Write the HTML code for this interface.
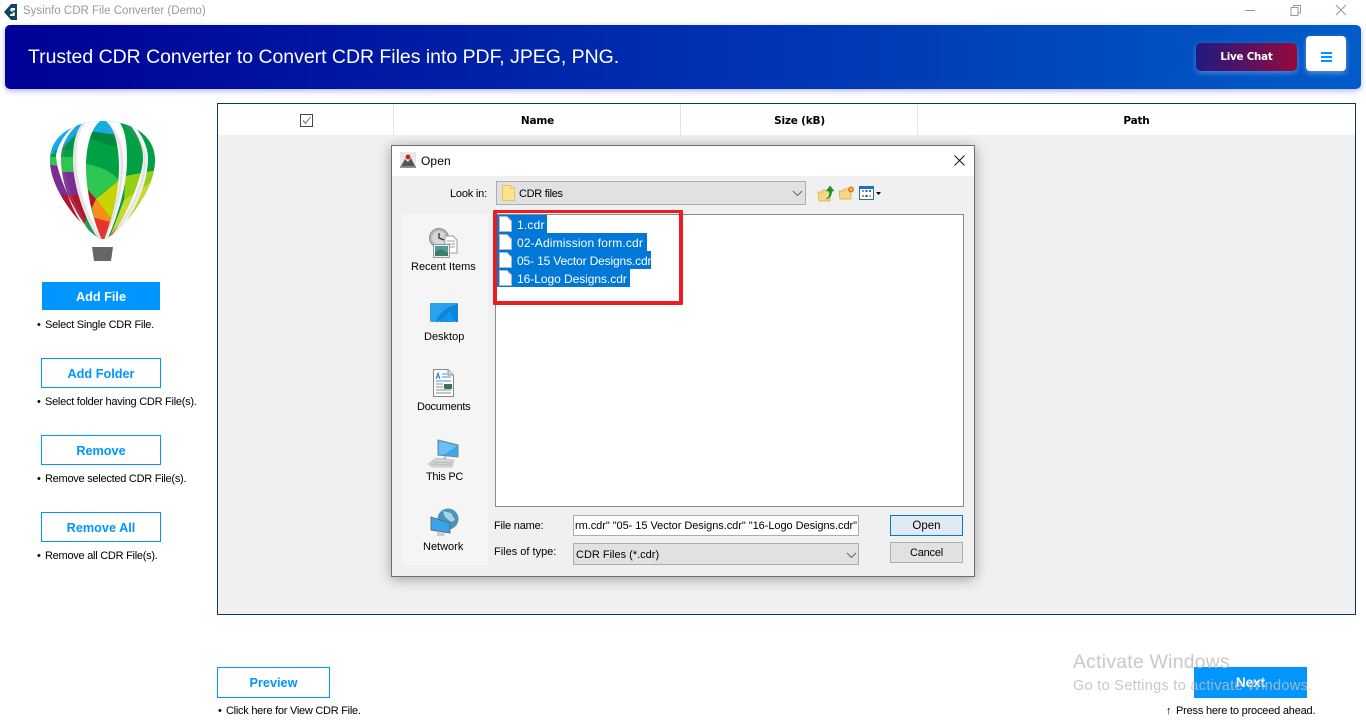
<!DOCTYPE html>
<html lang="en"><head><meta charset="utf-8"><title>Sysinfo CDR File Converter (Demo)</title>
<style>
html,body{margin:0;padding:0;background:#fff;width:1366px;height:728px;overflow:hidden}
body{position:relative;font-family:"Liberation Sans",sans-serif;color:#000}
.a{position:absolute}
.t{position:absolute;white-space:nowrap;line-height:1;font-size:12px}
.c{font-size:11px;letter-spacing:-.26px}
.c i{position:absolute;left:-8px;font-style:normal}
.p{font-size:11px}
.l{font-size:11px;letter-spacing:-.2px}
.btn{position:absolute;box-sizing:border-box;width:120px;height:30px;border:1px solid #0096ff;background:#fff;color:#0096ff;font:bold 12.7px/30px "Liberation Sans",sans-serif;text-align:center}
.hd{position:absolute;top:114px;font:bold 10.5px/14px "DejaVu Sans",sans-serif;letter-spacing:-.2px;text-align:center}
.sel{position:absolute;left:497px;height:18px;background:#0078d7}
.f{position:absolute;left:517px;color:#fff;font-size:12px;line-height:18px;white-space:nowrap}
svg{position:absolute;overflow:visible}
</style></head><body>

<!-- title bar -->
<svg style="left:3px;top:4px" width="16" height="16" viewBox="0 0 16 16"><path d="M8 0 1 8l7 8h6V0z" fill="#0f4560"/><path d="M12 4H8L7 6.500 11 9 7 10.500V12h4.500L12 9 8.500 6.500H12z" fill="#fff"/></svg>
<div class="t" style="left:23px;top:6px;color:#999;font-size:11.500px">Sysinfo CDR File Converter (Demo)</div>
<svg style="left:1245px;top:5px" width="110" height="12" viewBox="0 0 110 12" fill="none" stroke="#999" stroke-width="1"><path d="M0 5.500H10"/><path d="M46 2.500h7v8h-7zM48.500 2.500V.5h7V8h-2"/><path d="M91 0 101 10M101 0 91 10"/></svg>

<!-- header -->
<div class="a" style="left:5px;top:25px;width:1356px;height:64px;border-radius:5px;background:linear-gradient(90deg,#000096,#005cc8);box-shadow:0 2px 6px rgba(40,40,200,.35)"></div>
<div class="t" style="left:28px;top:48px;font-size:19.440px;color:#fff">Trusted CDR Converter to Convert CDR Files into PDF, JPEG, PNG.</div>
<div class="a" style="left:1196px;top:43px;width:101px;height:28px;border-radius:5px;background:linear-gradient(90deg,#1f1a80,#96093c);box-shadow:0 2px 6px rgba(200,210,255,.4);color:#fff;font:bold 10.300px/29px 'DejaVu Sans',sans-serif;letter-spacing:-.2px;text-align:center">Live Chat</div>
<div class="a" style="left:1306px;top:36px;width:40px;height:35px;border-radius:4px;background:#fff;box-shadow:0 2px 6px rgba(200,210,255,.5)"></div>
<div class="a" style="left:1321px;top:52px;width:11px;height:2px;background:#0096ff;box-shadow:0 4px 0 #0096ff,0 8px 0 #0096ff"></div>

<!-- balloon -->
<svg style="left:45px;top:115px" width="116" height="150" viewBox="45 115 116 150">
<defs>
<clipPath id="b"><path d="M103 121C75 121 50 135 50 160C50 190 80 226 100 239H106C126 226 155 190 155 160C155 135 131 121 103 121Z"/></clipPath>
<filter id="bl"><feGaussianBlur stdDeviation="1"/></filter>
</defs>
<g clip-path="url(#b)">
<!-- left gores -->
<rect x="45" y="115" width="45" height="130" fill="#00a044"/>
<path d="M45 115H92L80 130 60 150 50 155H45Z" fill="#13a8ec"/>
<path d="M55 155 76 136 85 135V150H55Z" fill="#00944a"/>
<rect x="45" y="157" width="45" height="15" fill="#2ec650"/>
<rect x="45" y="172" width="45" height="25" fill="#7b2c95"/>
<rect x="45" y="195" width="45" height="28" fill="#b3132f"/>
<rect x="85" y="222" width="12" height="20" fill="#f0641e"/>
<path d="M45 164 58 166 65 195 45 195Z" fill="#7b2c95"/>
<!-- centre gore -->
<rect x="86" y="115" width="33" height="130" fill="#00a044"/>
<rect x="86" y="115" width="33" height="19" fill="#16aee2"/>
<path d="M86 132C98 130 110 136 119 134V146C108 148 96 138 86 138Z" fill="#00893f"/>
<path d="M86 164C100 166 112 172 119 180V183C110 187 102 192 96 199L90 208 86 200Z" fill="#2ec650"/>
<path d="M88 190 96 199 92 207 90 208Z" fill="#b3132f"/>
<path d="M96 199C105 191 113 186 119 180V196L112 220Z" fill="#c8d400"/>
<path d="M96 199 112 220 108 240H98L92 208Z" fill="#f39019"/>
<path d="M92 217 110 222 106 240H98Z" fill="#e5352b"/>
<!-- right gores -->
<rect x="119" y="115" width="40" height="130" fill="#00a044"/>
<path d="M113 115H150V135L130 126 116 122Z" fill="#1cc4d8"/>
<path d="M125 176 158 170V188L124 205Z" fill="#95cf15"/>
<path d="M124 200 158 178V190L125 230 108 242Z" fill="#c8d830"/>
<path d="M108 238 118 226 116 242Z" fill="#e5352b"/>
<!-- white gaps -->
<path d="M102 120C92 125 86 145 86 167C86 195 95 225 102 240L99 240C88 225 73 190 73 160C73 145 75 130 85 120Z" fill="#fff"/>
<path d="M104 120C114 125 119 145 119 167C119 195 110 225 104 240L107 240C114 225 127 190 127 160C127 145 126 130 118 120Z" fill="#fff"/>
<path d="M80 121C66 130 58 145 56 155C56 175 78 222 98 240L92 238C78 222 61 190 61 158C61 148 66 132 84 120Z" fill="#fff"/>
<path d="M122 118C136 128 143 145 143 158C143 178 124 222 108 240L113 238C128 222 148 190 148 158C148 148 142 130 126 120Z" fill="#fff"/>
<!-- shadows -->
<g filter="url(#bl)" fill="none" stroke="#8a8a8a" stroke-width="2" opacity=".4">
<path d="M84 123C75 132 75 146 75 160C75 190 89 222 100 239"/>
<path d="M107 125C120 135 122 150 122 165C122 190 112 222 104 239"/>
<path d="M75 128C66 138 62 150 62 160C63 190 82 222 98 239"/>
<path d="M126 125C140 140 145 150 145 160C145 190 125 222 109 239"/>
</g>
</g>
<path d="M92 247H113L111 261H94Z" fill="#666"/>
<path d="M94 262H111" stroke="#bbb" stroke-width="2" filter="url(#bl)"/>
</svg>

<!-- left buttons -->
<div class="btn" style="left:42px;top:282px;height:28px;width:118px;background:#0096ff;color:#fff;border:none;line-height:30px">Add File</div>
<div class="t c" style="left:45px;top:320px"><i>•</i>Select Single CDR File.</div>
<div class="btn" style="left:41px;top:358px">Add Folder</div>
<div class="t c" style="left:45px;top:397px"><i>•</i>Select folder having CDR File(s).</div>
<div class="btn" style="left:41px;top:435px">Remove</div>
<div class="t c" style="left:45px;top:474px"><i>•</i>Remove selected CDR File(s).</div>
<div class="btn" style="left:41px;top:512px">Remove All</div>
<div class="t c" style="left:45px;top:551px"><i>•</i>Remove all CDR File(s).</div>

<!-- table -->
<div class="a" style="left:217px;top:103px;width:1137px;height:510px;border:1px solid #0a3560;background:#f0f0f0"></div>
<div class="a" style="left:218px;top:104px;width:1137px;height:31px;background:#fff"></div>
<div class="a" style="left:393px;top:104px;width:1px;height:31px;background:#e4e4e4"></div>
<div class="a" style="left:680px;top:104px;width:1px;height:31px;background:#e4e4e4"></div>
<div class="a" style="left:917px;top:104px;width:1px;height:31px;background:#e4e4e4"></div>
<svg style="left:300px;top:114px" width="13" height="13" viewBox="0 0 13 13" fill="none"><rect x=".5" y=".5" width="12" height="12" stroke="#444"/><path d="M3 6.500 5.500 9.500 10.500 3" stroke="#666" stroke-width="1"/></svg>
<div class="hd" style="left:394px;width:287px">Name</div>
<div class="hd" style="left:681px;width:237px">Size (kB)</div>
<div class="hd" style="left:918px;width:437px">Path</div>

<!-- dialog -->
<div class="a" style="left:391px;top:145px;width:582px;height:430px;background:#f0f0f0;border:1px solid #6e6e6e;box-shadow:0 2px 12px rgba(0,0,0,.35)"></div>
<div class="a" style="left:392px;top:146px;width:582px;height:30px;background:#fff"></div>
<svg style="left:400px;top:152px" width="16" height="16" viewBox="0 0 16 16"><rect x="0" y="0" width="16" height="16" fill="#e8e8e8"/><path d="M1 14 5 7l3 3 3-4 4 8z" fill="#555"/><circle cx="8" cy="5" r="2.500" fill="#c9262c"/><path d="M0 15h16" stroke="#333"/></svg>
<div class="t" style="left:421px;top:155px;font-size:12px;letter-spacing:.1px">Open</div>
<svg style="left:954px;top:155px" width="11" height="11" viewBox="0 0 11 11" fill="none" stroke="#111" stroke-width="1"><path d="M.5.500 10.500 10.500M10.500.500 .5 10.500"/></svg>

<div class="t l" style="left:450px;top:189px">Look in:</div>
<div class="a" style="left:496px;top:181px;box-sizing:border-box;width:310px;height:24px;background:#e1e1e1;border:1px solid #adadad"></div>
<svg style="left:502px;top:185px" width="13" height="16" viewBox="0 0 13 16"><path d="M.5.500H9V3h3.500V15.500H.5Z" fill="#fde38d" stroke="#e3c25f"/></svg>
<div class="t" style="left:519px;top:189px;font-size:11px;letter-spacing:-.3px">CDR files</div>
<svg style="left:792px;top:190px" width="11" height="7" viewBox="0 0 11 7" fill="none" stroke="#666"><path d="M1 1 5.500 5.500 10 1"/></svg>
<svg style="left:818px;top:185px" width="16" height="16" viewBox="0 0 16 16"><path d="M0 7h4l1-2h7v11H1Z" fill="#f4d884" stroke="#c9a94e" stroke-width=".7"/><path d="M8 14C12 12 12 8 11 6H8.500L12 1 16 6H13.500C14 10 12 13 8 14Z" fill="#169a24" stroke="#0c6a18" stroke-width=".5"/></svg>
<svg style="left:839px;top:186px" width="16" height="14" viewBox="0 0 16 14"><path d="M0 5h4l1-2h7v10H1Z" fill="#f4d884" stroke="#c9a94e" stroke-width=".7"/><circle cx="12" cy="3.500" r="3" fill="#f0741d"/><circle cx="12" cy="3.500" r="1.300" fill="#ffd34d"/></svg>
<svg style="left:859px;top:186px" width="22" height="14" viewBox="0 0 22 14"><rect x=".5" y=".5" width="14" height="13" fill="#fff" stroke="#1c6fc4"/><rect x="0" y="0" width="15" height="3" fill="#1c6fc4"/><path d="M3 4h2v2H3z" fill="#8c8ccc"/><path d="M6.500 4h2v2h-2z" fill="#2a5ab0"/><path d="M10 4h2v2h-2z" fill="#1f9a3a"/><path d="M3 9h2v2H3z" fill="#f0763a"/><path d="M6.500 9h2v2h-2z" fill="#1a3b80"/><path d="M10 9h2v2h-2z" fill="#e9b23a"/><path d="M17 6h5l-2.500 3z" fill="#000"/></svg>

<!-- places -->
<div class="a" style="left:403px;top:214px;width:85px;height:351px;background:#f5f5f5"></div>
<svg style="left:429px;top:228px" width="30" height="30" viewBox="0 0 30 30"><circle cx="10" cy="10" r="9.500" fill="#b5b8ba" stroke="#8d9092"/><circle cx="10" cy="10" r="7" fill="#d5d7d8"/><path d="M10 5v5l5 2" stroke="#333" stroke-width="1.300" fill="none"/><path d="M16 8h8l4 4v13H16Z" fill="#fff" stroke="#9a9a9a"/><path d="M18 13h8M18 16h8M18 19h8" stroke="#99a" stroke-width="1"/><rect x="4.500" y="16.500" width="16" height="13" fill="#eee" stroke="#9a9a9a"/><rect x="6" y="18" width="13" height="10" fill="#4d9aa0"/><path d="M6 24 12 21 19 25V28H6Z" fill="#3c7d6a"/></svg>
<div class="t p" style="left:411px;top:262px">Recent Items</div>
<svg style="left:430px;top:303px" width="28" height="20" viewBox="0 0 28 20"><rect width="28" height="19" fill="#0e85dc"/><path d="M0 19V0h28v1C15 4 8 12 6 19Z" fill="#2aa2ee"/><path d="M0 19h28" stroke="#bfe0fa" stroke-width="1" stroke-dasharray="2 6"/><path d="M10 19 20 8l4 11Z" fill="#1295ea"/></svg>
<div class="t p" style="left:424px;top:332px">Desktop</div>
<svg style="left:433px;top:369px" width="21" height="28" viewBox="0 0 21 28"><path d="M.5.500H15L20.500 6V27.500H.5Z" fill="#fff" stroke="#888"/><path d="M15 .5V6h5.500" fill="#ddd" stroke="#888"/><path d="M3 10 5 4 7 10M4 8h2" stroke="#1a7ad0" fill="none"/><path d="M9 5h5M9 8h9M3 12h15" stroke="#3a97e0"/><path d="M3 15h7M3 18h7M3 21h15M3 24h15" stroke="#888"/><rect x="11" y="15" width="8" height="5" fill="#3c6e68"/></svg>
<div class="t p" style="left:417px;top:402px;letter-spacing:-.25px">Documents</div>
<svg style="left:428px;top:439px" width="32" height="28" viewBox="0 0 32 28"><path d="M10 1 30 6V18L10 16Z" fill="#3aa8ee" stroke="#77838c"/><path d="M11 2 29 7 16 15.500H11Z" fill="#69c0f4"/><path d="M18 17V20H14Z" fill="#aaa"/><path d="M0 25 8 19 26 21 24 28H4Z" fill="#d2d5d5" stroke="#bfc2c2" stroke-width=".7"/><path d="M5 23 24 24M3 25 24 26" stroke="#aeb1b1" stroke-width=".7"/></svg>
<div class="t p" style="left:426px;top:472px;letter-spacing:-.3px">This PC</div>
<svg style="left:431px;top:508px" width="28" height="28" viewBox="0 0 28 28"><circle cx="17" cy="11" r="10.500" fill="#4a95bc"/><path d="M12 3 20 5 24 12 20 14 14 9Z" fill="#a9d4e6"/><path d="M0 9 19 15V25L0 22Z" fill="#39a4ea" stroke="#555e66" stroke-width=".8"/><path d="M6 24 14 25 13 28H6Z" fill="#ccc"/></svg>
<div class="t p" style="left:423px;top:542px">Network</div>

<!-- file list -->
<div class="a" style="left:495px;top:214px;box-sizing:border-box;width:469px;height:293px;background:#fff;border:1px solid #8a8a8a"></div>
<div class="sel" style="top:215px;width:50px"></div>
<div class="sel" style="top:233px;width:150px"></div>
<div class="sel" style="top:251px;width:154px"></div>
<div class="sel" style="top:269px;width:133px"></div>
<svg style="left:499px;top:216px" width="13" height="72" viewBox="0 0 13 72"><path d="M.5.500H8L12.500 5V15.500H.5Z" fill="#fff" stroke="#b4b4b4"/><path d="M.5 18.500H8L12.500 23V33.500H.5Z" fill="#fff" stroke="#b4b4b4"/><path d="M.5 36.500H8L12.500 41V51.500H.5Z" fill="#fff" stroke="#b4b4b4"/><path d="M.5 54.500H8L12.500 59V69.500H.5Z" fill="#fff" stroke="#b4b4b4"/></svg>
<div class="f" style="top:216px;letter-spacing:.2px">1.cdr</div>
<div class="f" style="top:234px;letter-spacing:.15px">02-Adimission form.cdr</div>
<div class="f" style="top:252px;letter-spacing:-.15px">05- 15 Vector Designs.cdr</div>
<div class="f" style="top:270px;letter-spacing:-.05px">16-Logo Designs.cdr</div>
<div class="a" style="left:493px;top:210px;box-sizing:border-box;width:190px;height:95px;border:4px solid #ed1c24;border-top-width:3px;border-radius:1px"></div>

<!-- bottom of dialog -->
<div class="t l" style="left:494px;top:521px">File name:</div>
<div class="a" style="left:573px;top:515px;box-sizing:border-box;width:286px;height:21px;background:#fff;border:1px solid #adadad"></div>
<div class="a" style="left:575px;top:516px;width:282px;height:19px;overflow:hidden"><div class="t" style="right:0;top:5px;font-size:11px;letter-spacing:-.05px">rm.cdr" "05- 15 Vector Designs.cdr" "16-Logo Designs.cdr"</div></div>
<div class="t p" style="left:494px;top:547px">Files of type:</div>
<div class="a" style="left:573px;top:543px;box-sizing:border-box;width:286px;height:22px;background:#e1e1e1;border:1px solid #adadad"></div>
<div class="t p" style="left:576px;top:550px">CDR Files (*.cdr)</div>
<svg style="left:846px;top:552px" width="11" height="7" viewBox="0 0 11 7" fill="none" stroke="#666"><path d="M1 1 5.500 5.500 10 1"/></svg>
<div class="a" style="left:890px;top:515px;box-sizing:border-box;width:73px;height:21px;background:#e1e9f2;border:1px solid #0078d7;font-size:11.500px;line-height:20px;text-align:center">Open</div>
<div class="a" style="left:890px;top:542px;box-sizing:border-box;width:73px;height:21px;background:#e1e1e1;border:1px solid #adadad;font-size:11px;letter-spacing:-.2px;line-height:20px;text-align:center">Cancel</div>

<!-- preview / next -->
<div class="btn" style="left:217px;top:667px;width:113px;height:31px;line-height:30px">Preview</div>
<div class="t c" style="left:226px;top:706px"><i>•</i>Click here for View CDR File.</div>
<div class="a" style="left:1194px;top:667px;width:113px;height:31px;background:#0096ff;color:#fff;font:bold 13.500px/31px 'Liberation Sans',sans-serif;text-align:center">Next</div>
<div class="t" style="left:1166px;top:706px;font-size:11px">↑</div>
<div class="t" style="left:1176px;top:706px;font-size:11px;letter-spacing:-.2px">Press here to proceed ahead.</div>
<div class="t" style="left:1073px;top:653px;font-size:19.300px;color:rgba(190,190,190,.85);letter-spacing:.3px">Activate Windows</div>
<div class="t" style="left:1073px;top:679px;font-size:14.500px;color:rgba(190,190,190,.85);letter-spacing:.3px">Go to Settings to activate Windows.</div>
</body></html>
